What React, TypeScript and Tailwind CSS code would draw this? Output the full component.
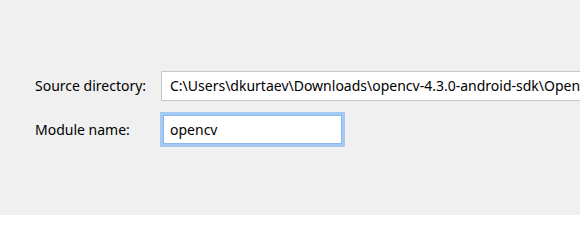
import React from "react";

export default function App() {
    return (
        <div className="w-[580px] h-[215px] overflow-hidden bg-[#f0f0f0] text-black font-['Noto_Sans',sans-serif] text-[14px]">
            <div className="pt-[71px] pl-[35px]">
                {/* Source directory row */}
                <div className="flex items-center h-[30px]">
                    <label className="w-[126px] shrink-0 leading-none">Source directory:</label>
                    <div className="h-[30px] w-[600px] shrink-0 bg-white border border-[#c8c8c8] flex items-center pl-[8px] whitespace-nowrap leading-none">
                        C:\Users\dkurtaev\Downloads\opencv-4.3.0-android-sdk\OpenCV-android-sdk
                    </div>
                </div>

                {/* Module name row */}
                <div className="flex items-center h-[35px] mt-[11px]">
                    <label className="w-[125px] shrink-0 leading-none">Module name:</label>
                    <div className="h-[35px] w-[185px] bg-white border-[3px] border-[#a4c9f2] shadow-[inset_0_0_0_1px_#8fb8ea] flex items-center pl-[7px] leading-none">
                        opencv
                    </div>
                </div>
            </div>
        </div>
    );
}
